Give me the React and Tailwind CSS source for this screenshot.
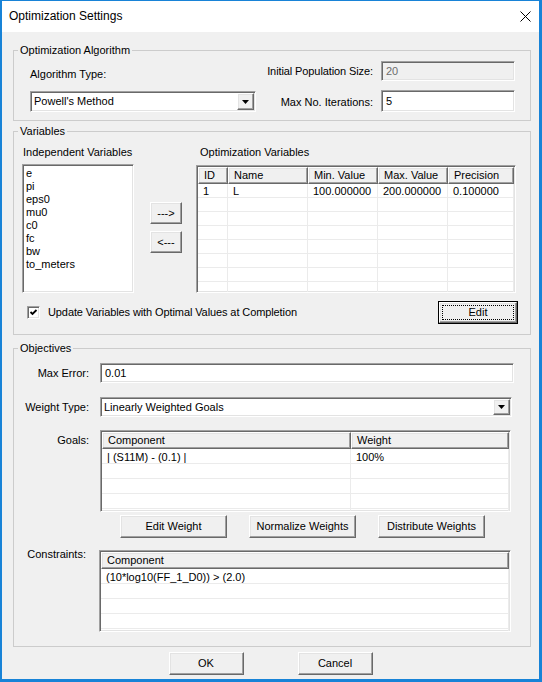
import React from "react";

const sunken =
  "border border-t-[#a0a0a0] border-l-[#a0a0a0] border-b-white border-r-white shadow-[inset_1px_1px_0_#696969,inset_-1px_-1px_0_#e3e3e3]";
const raised =
  "border border-t-white border-l-white border-b-[#696969] border-r-[#696969] shadow-[inset_-1px_-1px_0_#a0a0a0,inset_1px_1px_0_#e3e3e3]";

function Group({ title, className, children }) {
  return (
    <fieldset className={`border border-[#cccccc] shrink-0 ${className}`}>
      <legend className="ml-[4px] px-[2px] leading-[13px]">{title}</legend>
      {children}
    </fieldset>
  );
}

function Combo({ value, className }) {
  return (
    <div className={`${sunken} bg-white p-[1px] flex ${className}`}>
      <span className="flex-1 pl-[2px] self-center truncate">{value}</span>
      <span className={`${raised} bg-[#f0f0f0] w-[17px] flex items-center justify-center`}>
        <svg width="7" height="4" viewBox="0 0 7 4">
          <path d="M0 0h7L3.5 4z" fill="#000" />
        </svg>
      </span>
    </div>
  );
}

function Field({ value, disabled, className }) {
  return (
    <div
      className={`${sunken} flex items-center pl-[4px] ${
        disabled ? "bg-[#f0f0f0] text-[#6d6d6d]" : "bg-white"
      } ${className}`}>
      {value}
    </div>
  );
}

function Button({ children, className }) {
  return (
    <div className={`${raised} bg-[#f0f0f0] flex items-center justify-center ${className}`}>{children}</div>
  );
}

function Grid({ cols, rows, count, rowH = "h-[14px]", className }) {
  const blank = Array.from({ length: count - rows.length }, () => cols.map(() => ""));
  const all = [...rows, ...blank];
  return (
    <div className={`${sunken} bg-white p-[1px] overflow-hidden flex flex-col ${className}`}>
      <div className="flex h-[17px] shrink-0">
        {cols.map((c) => (
          <div
            key={c.label}
            className={`${c.w} ${raised} bg-[#f0f0f0] flex items-center pl-[5px] whitespace-nowrap`}>
            {c.label}
          </div>
        ))}
      </div>
      {all.map((r, i) => (
        <div key={i} className={`flex ${rowH} shrink-0 border-b border-[#ebebeb]`}>
          {cols.map((c, j) => (
            <div
              key={j}
              className={`${c.w} border-r border-[#ebebeb] flex items-center pt-[2px] pl-[5px] whitespace-nowrap`}>
              {r[j]}
            </div>
          ))}
        </div>
      ))}
    </div>
  );
}

const varCols = [
  { label: "ID", w: "w-[30px]" },
  { label: "Name", w: "w-[80px]" },
  { label: "Min. Value", w: "w-[70px]" },
  { label: "Max. Value", w: "w-[70px]" },
  { label: "Precision", w: "flex-1" },
];

const independent = ["e", "pi", "eps0", "mu0", "c0", "fc", "bw", "to_meters"];

export default function App() {
  return (
    <div className="w-[542px] h-[682px] bg-[#f0f0f0] border-[#1883d7] border-t border-l-2 border-r-[3px] border-b-[3px] flex flex-col text-[11px] leading-[13px] text-black font-['Liberation_Sans',Arial,sans-serif] overflow-hidden">
      <div className="h-[31px] bg-white flex items-center justify-between pl-[7px] pr-[8px] shrink-0">
        <span className="text-[12px]">Optimization Settings</span>
        <svg width="11" height="11" viewBox="0 0 11 11">
          <path d="M0.5 0.5L10.5 10.5M10.5 0.5L0.5 10.5" stroke="#000" strokeWidth="1" />
        </svg>
      </div>

      <div className="flex flex-col pl-[11px]">
        <Group title="Optimization Algorithm" className="mt-[12px] w-[518px] h-[77px]">
          <div className="flex">
            <div className="ml-[16px] w-[226px] flex flex-col">
              <div className="mt-[11px]">Algorithm Type:</div>
              <Combo className="mt-[10px] h-[21px]" value="Powell's Method" />
            </div>
            <div className="ml-auto mr-[15px] flex flex-col">
              <div className="mt-[4px] flex items-center justify-end gap-[8px]">
                <span className="tracking-[-0.1px]">Initial Population Size:</span>
                <Field value="20" disabled className="w-[134px] h-[20px]" />
              </div>
              <div className="mt-[9px] flex items-center justify-end gap-[8px]">
                <span className="pt-[3px]">Max No. Iterations:</span>
                <Field value="5" className="w-[134px] h-[22px]" />
              </div>
            </div>
          </div>
        </Group>

        <Group title="Variables" className="mt-[4px] w-[518px] h-[210px]">
          <div className="flex">
            <div className="ml-[8px] w-[112px] flex flex-col">
              <div className="mt-[8px] pl-[1px] whitespace-nowrap">Independent Variables</div>
              <div className={`${sunken} mt-[5px] h-[129px] bg-white pl-[3px] pt-[2px]`}>
                {independent.map((v) => (
                  <div key={v}>{v}</div>
                ))}
              </div>
            </div>
            <div className="ml-[16px] w-[32px] flex flex-col gap-[7px] pt-[64px]">
              <Button className="h-[22px]">---&gt;</Button>
              <Button className="h-[22px]">&lt;---</Button>
            </div>
            <div className="ml-[14px] w-[320px] flex flex-col">
              <div className="mt-[8px] pl-[4px]">Optimization Variables</div>
              <Grid
                className="mt-[6px] h-[128px]"
                cols={varCols}
                rows={[["1", "L", "100.000000", "200.000000", "0.100000"]]}
                count={8}
              />
            </div>
          </div>
          <div className="flex items-center mt-[8px] h-[23px]">
            <div className={`${sunken} ml-[13px] w-[13px] h-[13px] bg-white flex items-center justify-center`}>
              <svg width="9" height="9" viewBox="0 0 9 9">
                <path d="M1.5 4L3.5 6L7.5 2" stroke="#000" strokeWidth="1.8" fill="none" />
              </svg>
            </div>
            <span className="ml-[8px] tracking-[-0.1px]">Update Variables with Optimal Values at Completion</span>
            <div className="ml-auto mr-[12px] w-[80px] h-[23px] border border-black flex">
              <div className={`${raised} bg-[#f0f0f0] flex-1 flex p-[2px]`}>
                <div className="flex-1 border border-dotted border-black flex items-center justify-center">
                  Edit
                </div>
              </div>
            </div>
          </div>
        </Group>

        <Group title="Objectives" className="mt-[7px] w-[518px] h-[305px]">
          <div className="flex items-center mt-[8px]">
            <div className="w-[75px] text-right">Max Error:</div>
            <Field value="0.01" className="ml-[11px] w-[414px] h-[20px]" />
          </div>
          <div className="flex items-center mt-[14px]">
            <div className="w-[75px] text-right">Weight Type:</div>
            <Combo className="ml-[11px] w-[412px] h-[20px]" value="Linearly Weighted Goals" />
          </div>
          <div className="flex items-start mt-[13px]">
            <div className="w-[75px] text-right pt-[4px]">Goals:</div>
            <Grid
              className="ml-[11px] w-[411px] h-[82px]"
              cols={[
                { label: "Component", w: "w-[249px]" },
                { label: "Weight", w: "flex-1" },
              ]}
              rows={[["| (S11M) - (0.1) |", "100%"]]}
              rowH="h-[15px]"
              count={5}
            />
          </div>
          <div className="flex mt-[3px] pl-[106px] gap-[22px]">
            <Button className="w-[107px] h-[23px]">Edit Weight</Button>
            <Button className="w-[107px] h-[23px]">Normalize Weights</Button>
            <Button className="w-[107px] h-[23px]">Distribute Weights</Button>
          </div>
          <div className="flex items-start mt-[12px]">
            <div className="w-[72px] text-right -mt-[2px]">Constraints:</div>
            <Grid
              className="ml-[13px] w-[412px] h-[82px]"
              cols={[{ label: "Component", w: "flex-1" }]}
              rows={[["(10*log10(FF_1_D0)) > (2.0)"]]}
              rowH="h-[15px]"
              count={5}
            />
          </div>
        </Group>
      </div>

      <div className="flex justify-center gap-[54px] mt-[5px]">
        <Button className="w-[75px] h-[23px]">OK</Button>
        <Button className="w-[75px] h-[23px]">Cancel</Button>
      </div>
    </div>
  );
}
